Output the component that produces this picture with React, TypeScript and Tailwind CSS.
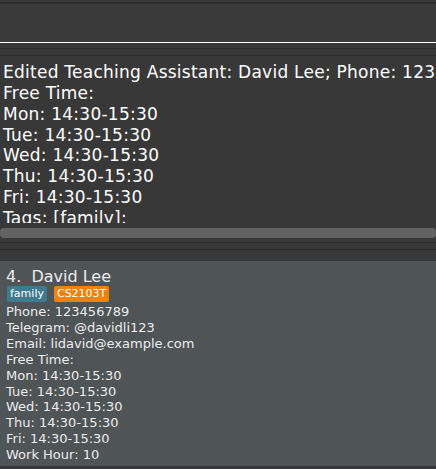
import React from 'react';

const resultLines = [
  'Edited Teaching Assistant: David Lee; Phone: 123456789; Telegram: @davidli123; Email: lidavid@example.com;',
  'Free Time:',
  'Mon: 14:30-15:30',
  'Tue: 14:30-15:30',
  'Wed: 14:30-15:30',
  'Thu: 14:30-15:30',
  'Fri: 14:30-15:30',
  'Tags: [family]:',
];

const details = [
  'Phone: 123456789',
  'Telegram: @davidli123',
  'Email: lidavid@example.com',
  'Free Time:',
  'Mon: 14:30-15:30',
  'Tue: 14:30-15:30',
  'Wed: 14:30-15:30',
  'Thu: 14:30-15:30',
  'Fri: 14:30-15:30',
  'Work Hour: 10',
];

export default function App() {
  return (
    <div className="w-[436px] h-[469px] overflow-hidden bg-[#383838] flex flex-col font-['DejaVu_Sans',sans-serif]">
      {/* command box */}
      <div className="h-[2px] shrink-0" />
      <div className="h-[2px] shrink-0 bg-[#2b2b2b]" />
      <div className="h-[38px] shrink-0 bg-[#3a3a3a]" />
      <div className="h-[1px] shrink-0 bg-white" />
      <div className="h-[5px] shrink-0" />
      <div className="h-[1px] shrink-0 bg-[#2b2b2b]" />
      <div className="h-[6px] shrink-0" />
      <div className="h-[1px] shrink-0 bg-[#2b2b2b]" />

      {/* result display */}
      <div className="h-[172px] shrink-0">
        <div className="h-[167px] overflow-hidden pt-[6px] pl-[3px]">
          {resultLines.map((line) => (
            <div key={line} className="text-[17px] tracking-[0.25px] leading-[20.85px] text-white whitespace-nowrap">
              {line}
            </div>
          ))}
        </div>
      </div>
      <div className="h-[10px] shrink-0 bg-[#636363] rounded-[4px]" />
      <div className="h-[4px] shrink-0" />
      <div className="h-[1px] shrink-0 bg-[#2b2b2b]" />
      <div className="h-[6px] shrink-0" />
      <div className="h-[1px] shrink-0 bg-[#2b2b2b]" />
      <div className="h-[11px] shrink-0" />

      {/* person card */}
      <div className="h-[205px] shrink-0 bg-[#4f5457] pt-[6px] pl-[6px] text-[#ececec]">
        <div className="text-[16px] leading-[19px] whitespace-pre">4.  David Lee</div>
        <div className="flex gap-[7px] ml-[1px] h-[16px]">
          <span className="bg-[#3e7b91] text-white text-[11px] leading-[16px] px-[3px] rounded-[2px]">family</span>
          <span className="bg-[#f0820a] text-white text-[11px] leading-[16px] px-[3px] rounded-[2px]">CS2103T</span>
        </div>
        <div className="mt-[2px]">
          {details.map((line) => (
            <div key={line} className="text-[13px] leading-[15.9px] whitespace-nowrap">
              {line}
            </div>
          ))}
        </div>
      </div>
      <div className="flex-1 bg-[#383838]" />
    </div>
  );
}
